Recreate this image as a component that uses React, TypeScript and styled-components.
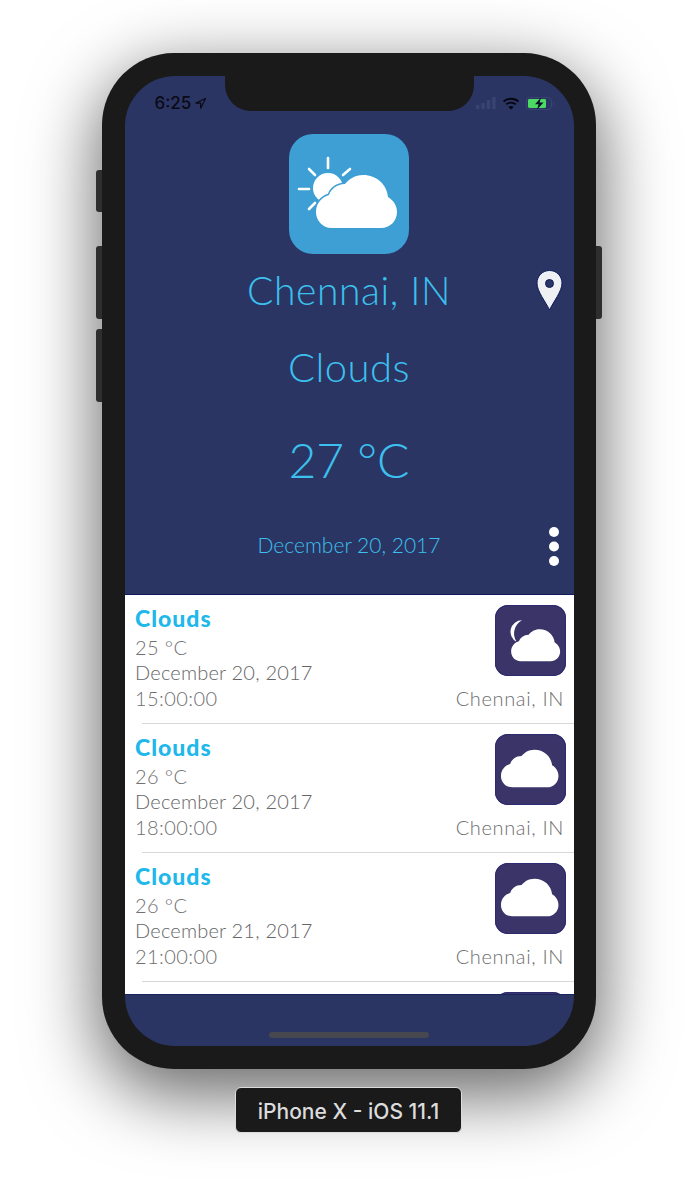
import React from 'react';
import styled, { createGlobalStyle } from 'styled-components';

const GlobalStyle = createGlobalStyle`
    html, body {
        margin: 0;
        padding: 0;
        background: #fff;
    }
    body {
        width: 698px;
        height: 1200px;
        overflow: hidden;
        font-family: "Lato", "Noto Sans", sans-serif;
    }
`;

const Page = styled.div`
    display: flex;
    flex-direction: column;
    align-items: center;
    padding-top: 53px;
`;

const Device = styled.div`
    position: relative;
    box-sizing: border-box;
    width: 494px;
    height: 1016px;
    padding: 23px 22.5px;
    background: #1a1a1a;
    border-radius: 72px;
    box-shadow: 0 22px 70px 4px rgba(0, 0, 0, 0.6);
`;

const SideButton = styled.div<{ $side: 'left' | 'right'; $top: number; $height: number }>`
    position: absolute;
    top: ${p => p.$top}px;
    ${p => p.$side}: -6px;
    width: 6px;
    height: ${p => p.$height}px;
    background: #2e2e2e;
    border-radius: ${p => (p.$side === 'left' ? '3px 0 0 3px' : '0 3px 3px 0')};
`;

const Screen = styled.div`
    position: relative;
    display: flex;
    flex-direction: column;
    height: 100%;
    background: #2a3564;
    border-radius: 50px;
    overflow: hidden;
`;

const Notch = styled.div`
    position: absolute;
    top: 0;
    left: 100px;
    width: 249px;
    height: 35px;
    background: #1a1a1a;
    border-radius: 0 0 26px 26px;
`;

const StatusBar = styled.div`
    display: flex;
    align-items: center;
    justify-content: space-between;
    height: 58px;
    padding: 0 18.5px 4px 30px;
    box-sizing: border-box;
`;

const StatusGroup = styled.div<{ $gap: number }>`
    display: flex;
    align-items: center;
    gap: ${p => p.$gap}px;
`;

const Time = styled.span`
    font-family: "Inter", sans-serif;
    font-size: 17px;
    font-weight: 500;
    color: #0a0a14;
`;

const Header = styled.header`
    display: flex;
    flex-direction: column;
    align-items: stretch;
    height: 460px;
    color: #3cc0ee;
    flex: none;
    border-bottom: 1px solid #0e1a5c;
    box-sizing: content-box;
`;

const LogoTile = styled.div`
    align-self: center;
    width: 120px;
    height: 120px;
    background: #3d9fd3;
    border-radius: 24px;
    flex: none;
`;

const HeaderRow = styled.div<{ $top: number; $height: number }>`
    display: grid;
    grid-template-columns: 1fr auto 1fr;
    align-items: center;
    margin-top: ${p => p.$top}px;
    height: ${p => p.$height}px;
`;

const HeaderText = styled.div<{ $size: number; $spacing: number }>`
    grid-column: 2;
    font-size: ${p => p.$size}px;
    letter-spacing: ${p => p.$spacing}px;
    font-weight: 300;
    line-height: 1;
    white-space: nowrap;
`;

const RowAction = styled.div<{ $right: number }>`
    grid-column: 3;
    justify-self: end;
    display: flex;
    margin-right: ${p => p.$right}px;
`;

const List = styled.div`
    flex: 1;
    min-height: 0;
    background: #fff;
    overflow: hidden;
`;

const Footer = styled.div`
    display: flex;
    justify-content: center;
    flex: none;
    height: 52px;
    box-sizing: border-box;
    padding-top: 37px;
    border-top: 1px solid #1a2560;
`;

const HomeBar = styled.div`
    width: 160px;
    height: 6px;
    background: #47474f;
    border-radius: 3px;
`;

const Row = styled.div`
    display: flex;
    justify-content: space-between;
    box-sizing: border-box;
    height: 129px;
    padding: 10px 8px 12px 10.5px;
    border-bottom: 1px solid #d8d8d8;
    border-image: linear-gradient(to right, #fff 18px, #d8d8d8 18px) 1;
`;

const RowText = styled.div`
    display: flex;
    flex-direction: column;
    margin-top: -1px;
    color: #666;
    font-size: 20px;
    font-weight: 300;
    line-height: 25.5px;
    letter-spacing: 0.2px;
`;

const Condition = styled.div`
    font-size: 23px;
    font-weight: 900;
    line-height: 29px;
    letter-spacing: 1px;
    color: #20b8ea;
    margin-bottom: 2px;
`;

const Muted = styled.div`
    color: #707070;
    letter-spacing: 0.4px;
`;

const DateLine = styled.div`
    margin: -1px 0 1px;
`;

const RowSide = styled.div`
    display: flex;
    flex-direction: column;
    align-items: flex-end;
    justify-content: space-between;
`;

const Tile = styled.div`
    width: 71px;
    height: 71px;
    box-sizing: border-box;
    border-radius: 13px;
    background: #3a3468;
    box-shadow: inset 0 0 0 1px #2c2a70;
`;

const City = styled.div`
    font-size: 20px;
    font-weight: 300;
    line-height: 25px;
    letter-spacing: 0.65px;
    margin-right: 1.5px;
    color: #6e6e6e;
`;

const DeviceLabel = styled.div`
    position: relative;
    margin: 18px 1px 0 0;
    padding-top: 2px;
    width: 227px;
    height: 46px;
    display: flex;
    align-items: center;
    justify-content: center;
    background: #1a1a1a;
    border: 1px solid #dcdcdc;
    box-sizing: border-box;
    border-radius: 6px;
    color: #dcdcdc;
    font-family: "Inter", sans-serif;
    font-size: 21px;
    font-weight: 500;
`;

const CLOUD =
    'M43 94C33 94 27 86 27 78C27 69 33 63 40 61C42 55 48 50 56 50C60 45 66 41 74 41C88 41 98 51 99 63C104 66 108 71 108 78C108 87 101 94 92 94Z';

function SunCloud() {
    return (
        <svg width="120" height="120" viewBox="0 0 120 120">
            <circle cx="39" cy="54" r="15" fill="#fff" />
            <g stroke="#fff" strokeWidth="2.6" strokeLinecap="round">
                <path d="M39 24V34" />
                <path d="M20 35L26 41" />
                <path d="M61 35L54 41" />
                <path d="M10 55H20" />
                <path d="M20 75L26 69" />
            </g>
            <path d={CLOUD} fill="#fff" stroke="#3d9fd3" strokeWidth="3" paintOrder="stroke" />
        </svg>
    );
}

function MoonCloud() {
    return (
        <svg width="71" height="71" viewBox="0 0 71 71">
            <path d="M27 15.3A11.5 11.5 0 0 0 21.7 37A15 15 0 0 1 27 15.3Z" fill="#fff" />
            <path
                d={CLOUD}
                fill="#fff"
                stroke="#3a3468"
                strokeWidth="4"
                paintOrder="stroke"
                transform="translate(-0.2 -0.6) scale(0.605)"
            />
        </svg>
    );
}

function PlainCloud() {
    return (
        <svg width="71" height="71" viewBox="0 0 71 71">
            <path d={CLOUD} fill="#fff" transform="translate(-13.2 -13.4) scale(0.71)" />
        </svg>
    );
}

const forecasts = [
    { temp: '25 °C', date: 'December 20, 2017', time: '15:00:00', night: true },
    { temp: '26 °C', date: 'December 20, 2017', time: '18:00:00', night: false },
    { temp: '26 °C', date: 'December 21, 2017', time: '21:00:00', night: false },
];

export default function App() {
    return (
        <Page>
            <GlobalStyle />
            <Device>
                <SideButton $side="left" $top={117} $height={42} />
                <SideButton $side="left" $top={193} $height={73} />
                <SideButton $side="left" $top={276} $height={73} />
                <SideButton $side="right" $top={193} $height={73} />
                <Screen>
                    <Notch />
                    <StatusBar>
                        <StatusGroup $gap={4}>
                            <Time>6:25</Time>
                            <svg width="11" height="11" viewBox="0 0 11 11">
                                <path d="M10.5 .5L.5 5.2H5.6V10.5Z" fill="none" stroke="#0a0a14" strokeWidth="1.2" />
                            </svg>
                        </StatusGroup>
                        <StatusGroup $gap={6}>
                            <svg width="20" height="12" viewBox="0 0 20 12" fill="#3a4470">
                                <rect x="0" y="8" width="3.4" height="4" rx=".6" />
                                <rect x="5.4" y="6" width="3.4" height="6" rx=".6" />
                                <rect x="10.8" y="3" width="3.4" height="9" rx=".6" />
                                <rect x="16.2" y="0" width="3.4" height="12" rx=".6" />
                            </svg>
                            <svg width="18" height="13" viewBox="0 0 17 13" fill="none" stroke="#05050f" strokeWidth="1.9">
                                <path d="M1 4.6C5 .8 12 .8 16 4.6" />
                                <path d="M3.7 7.4C6.3 5 10.7 5 13.3 7.4" />
                                <path d="M8.5 12.6L5.9 9.9C7.3 8.7 9.7 8.7 11.1 9.9Z" fill="#05050f" stroke="none" />
                            </svg>
                            <svg width="29" height="13" viewBox="0 0 29 13">
                                <rect x=".5" y=".5" width="25" height="12" rx="3" fill="none" stroke="#3a4470" />
                                <rect x="2" y="2" width="18" height="9" rx="1.4" fill="#4cd964" />
                                <path d="M15 .5L9 7.2H12.6L11 12.5L17.5 5.4H13.6Z" fill="#0a0f2a" />
                                <path d="M27 4.4C28.4 5 28.4 8 27 8.6Z" fill="#3a4470" />
                            </svg>
                        </StatusGroup>
                    </StatusBar>
                    <Header>
                        <LogoTile>
                            <SunCloud />
                        </LogoTile>
                        <HeaderRow $top={16} $height={40}>
                            <HeaderText $size={39} $spacing={0.6}>Chennai, IN</HeaderText>
                            <RowAction $right={11}>
                                <svg width="27" height="41" viewBox="-0.5 -0.5 27 41">
                                    <path
                                        fillRule="evenodd"
                                        fill="#eef0f3"
                                        stroke="#0e1a5c"
                                        strokeWidth="1"
                                        d="M13 0C5.8 0 .5 5.6 .5 12.6C.5 21 9 31 13 39.5C17 31 25.5 21 25.5 12.6C25.5 5.6 20.2 0 13 0ZM13 9A4 4 0 1 1 13 17A4 4 0 1 1 13 9Z"
                                    />
                                </svg>
                            </RowAction>
                        </HeaderRow>
                        <HeaderRow $top={37} $height={40}>
                            <HeaderText $size={40} $spacing={0.5}>Clouds</HeaderText>
                        </HeaderRow>
                        <HeaderRow $top={49} $height={48}>
                            <HeaderText $size={48} $spacing={0}>27 °C</HeaderText>
                        </HeaderRow>
                        <HeaderRow $top={36} $height={48}>
                            <HeaderText $size={21} $spacing={0}>December 20, 2017</HeaderText>
                            <RowAction $right={15}>
                                <svg width="10" height="48" viewBox="0 0 10 48" fill="#fff">
                                    <circle cx="5" cy="12" r="5" />
                                    <circle cx="5" cy="26.5" r="5" />
                                    <circle cx="5" cy="41" r="5" />
                                </svg>
                            </RowAction>
                        </HeaderRow>
                    </Header>
                    <List>
                        {forecasts.map(f => (
                            <Row key={f.time}>
                                <RowText>
                                    <Condition>Clouds</Condition>
                                    <Muted>{f.temp}</Muted>
                                    <DateLine>{f.date}</DateLine>
                                    <Muted>{f.time}</Muted>
                                </RowText>
                                <RowSide>
                                    <Tile>{f.night ? <MoonCloud /> : <PlainCloud />}</Tile>
                                    <City>Chennai, IN</City>
                                </RowSide>
                            </Row>
                        ))}
                        <Row>
                            <span />
                            <RowSide>
                                <Tile />
                            </RowSide>
                        </Row>
                    </List>
                    <Footer>
                        <HomeBar />
                    </Footer>
                </Screen>
            </Device>
            <DeviceLabel>iPhone X - iOS 11.1</DeviceLabel>
        </Page>
    );
}
